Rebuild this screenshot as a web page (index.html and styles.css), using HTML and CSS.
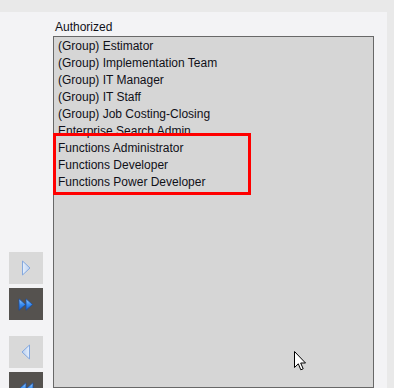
FILE: index.html
```html
<!DOCTYPE html>
<html>
<head>
<meta charset="utf-8">
<link rel="stylesheet" href="styles.css">
</head>
<body>
<div class="topstrip"></div>
<div class="main">
  <div class="panel">
    <div class="btncol">
      <div class="btn light">
        <svg width="10" height="16" viewBox="0 0 10 16"><defs><linearGradient id="g1" x1="0" y1="0" x2="1" y2="0"><stop offset="0" stop-color="#e6effb"/><stop offset="1" stop-color="#b9cff0"/></linearGradient></defs><path d="M1.5 1 L9 8 L1.5 15 Z" fill="url(#g1)" stroke="#84a8de" stroke-width="1" stroke-linejoin="round"/></svg>
      </div>
      <div class="btn dark">
        <svg width="16" height="13" viewBox="0 0 16 13"><defs><linearGradient id="g2" x1="0" y1="0" x2="0" y2="1"><stop offset="0" stop-color="#9fd0ff"/><stop offset="0.5" stop-color="#3b8ef0"/><stop offset="1" stop-color="#1c5fc9"/></linearGradient></defs><path d="M1 0.8 L7.5 6.5 L1 12.2 Z" fill="url(#g2)" stroke="#1a4c9e" stroke-width="0.8" stroke-linejoin="round"/><path d="M8 0.8 L14.5 6.5 L8 12.2 Z" fill="url(#g2)" stroke="#1a4c9e" stroke-width="0.8" stroke-linejoin="round"/></svg>
      </div>
      <div class="btn light gap">
        <svg width="10" height="16" viewBox="0 0 10 16"><defs><linearGradient id="g3" x1="1" y1="0" x2="0" y2="0"><stop offset="0" stop-color="#e6effb"/><stop offset="1" stop-color="#b9cff0"/></linearGradient></defs><path d="M8.5 1 L1 8 L8.5 15 Z" fill="url(#g3)" stroke="#84a8de" stroke-width="1" stroke-linejoin="round"/></svg>
      </div>
      <div class="btn dark">
        <svg width="16" height="13" viewBox="0 0 16 13"><path d="M15 0.8 L8.5 6.5 L15 12.2 Z" fill="url(#g2)" stroke="#1a4c9e" stroke-width="0.8" stroke-linejoin="round"/><path d="M8 0.8 L1.5 6.5 L8 12.2 Z" fill="url(#g2)" stroke="#1a4c9e" stroke-width="0.8" stroke-linejoin="round"/></svg>
      </div>
    </div>
    <div class="listcol">
      <div class="label">Authorized</div>
      <div class="listbox">
        <div class="row">(Group) Estimator</div>
        <div class="row">(Group) Implementation Team</div>
        <div class="row">(Group) IT Manager</div>
        <div class="row">(Group) IT Staff</div>
        <div class="row">(Group) Job Costing-Closing</div>
        <div class="row">Enterprise Search Admin</div>
        <div class="row">Functions Administrator</div>
        <div class="row">Functions Developer</div>
        <div class="row">Functions Power Developer</div>
        <div class="highlight"></div>
        <svg class="cursor" width="13" height="21" viewBox="0 0 13 21"><path d="M0.5 0.5 L0.5 16.5 L4.3 12.8 L6.8 18.8 L9.2 17.8 L6.7 12 L11.5 12 Z" fill="#fff" stroke="#000" stroke-width="1" stroke-linejoin="miter"/></svg>
      </div>
    </div>
  </div>
  <div class="rightstrip"></div>
</div>
</body>
</html>
```
FILE: styles.css
```css
html, body {
  margin: 0;
  padding: 0;
  width: 394px;
  height: 388px;
  overflow: hidden;
  background: #e9e9e9;
  font-family: "Liberation Sans", Arial, sans-serif;
  font-size: 12px;
  color: #101018;
}
.topstrip {
  height: 12px;
  background: #e9e9e9;
}
.main {
  display: flex;
  height: 376px;
}
.panel {
  width: 387px;
  height: 376px;
  background: #f3f3f5;
  display: flex;
  overflow: hidden;
}
.rightstrip {
  width: 7px;
  background: #e9e9e9;
}
.btncol {
  width: 53px;
  padding-left: 9px;
  padding-top: 240px;
  box-sizing: border-box;
  display: flex;
  flex-direction: column;
  gap: 4px;
}
.btn {
  width: 34px;
  height: 32px;
  flex: none;
  display: flex;
  align-items: center;
  justify-content: center;
}
.btn.light {
  background: #d9d9d9;
}
.btn.dark {
  background: #55524f;
}
.btn.gap {
  margin-top: 12px;
}
.listcol {
  padding-top: 8px;
  display: flex;
  flex-direction: column;
}
.label {
  line-height: 14px;
  height: 14px;
  padding-left: 2px;
  margin-bottom: 2px;
}
.listbox {
  position: relative;
  width: 321px;
  height: 360px;
  box-sizing: border-box;
  border: 1px solid #686868;
  background: #d6d6d6;
  padding-top: 1px;
}
.row {
  height: 17px;
  line-height: 17px;
  padding-left: 4px;
  white-space: nowrap;
}
.highlight {
  position: absolute;
  left: -1px;
  top: 96px;
  width: 198px;
  height: 62px;
  box-sizing: border-box;
  border: 3px solid #ff0000;
}
.cursor {
  position: absolute;
  left: 240px;
  top: 314px;
}
```
